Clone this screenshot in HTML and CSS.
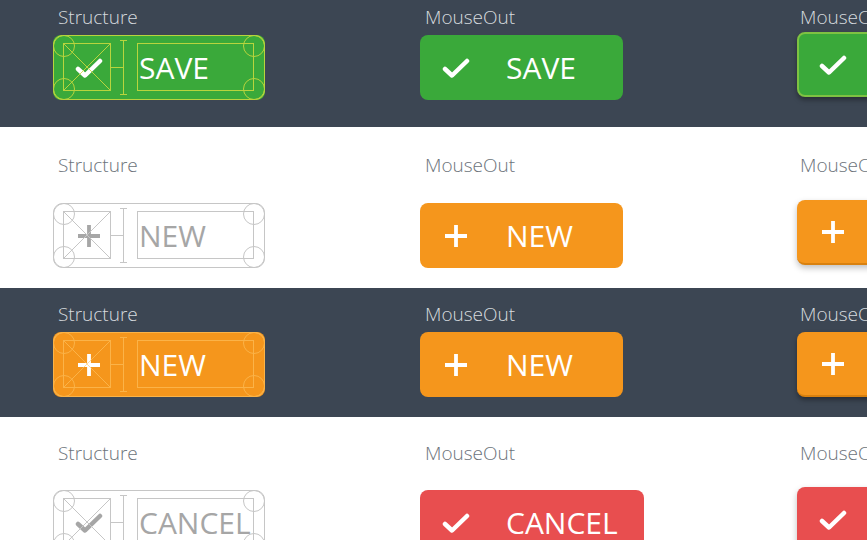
FILE: index.html
```html
<!DOCTYPE html>
<html lang="en">
<head>
    <meta charset="UTF-8">
    <meta name="viewport" content="width=device-width, initial-scale=1.0">
    <title>Button States</title>
    <link rel="stylesheet" href="styles.css">
</head>
<body>

    <!-- Save -->
    <section class="row dark row-save">
        <div class="cell">
            <p class="label">Structure</p>
            <div class="btn green structure">
                <svg class="guides" viewBox="0 0 212 65"><rect x="0.5" y="0.5" width="211" height="64" rx="9"/><circle cx="11" cy="11" r="10.5"/><circle cx="11" cy="54" r="10.5"/><circle cx="201" cy="11" r="10.5"/><circle cx="201" cy="54" r="10.5"/><rect x="10.5" y="8.5" width="47" height="47"/><rect x="84.5" y="8.5" width="116" height="47"/><path d="M10.5 8.5L57.5 55.5M57.5 8.5L10.5 55.5M57.5 32.5H70.5M70.5 5V60M67 5.5H74M67 59.5H74"/></svg>
                <svg class="ico" viewBox="0 0 28 28"><path d="M3 15l7 6.5L25 7"/></svg>
                <span class="txt">SAVE</span>
            </div>
        </div>
        <div class="cell">
            <p class="label">MouseOut</p>
            <div class="btn green">
                <svg class="ico" viewBox="0 0 28 28"><path d="M3 15l7 6.5L25 7"/></svg>
                <span class="txt">SAVE</span>
            </div>
        </div>
        <div class="cell over">
            <p class="label">MouseOver</p>
            <div class="btn green hover">
                <svg class="ico" viewBox="0 0 28 28"><path d="M3 15l7 6.5L25 7"/></svg>
                <span class="txt">SAVE</span>
            </div>
        </div>
    </section>

    <!-- New, light -->
    <section class="row light row-new">
        <div class="cell">
            <p class="label">Structure</p>
            <div class="btn outline structure">
                <svg class="guides" viewBox="0 0 212 65"><rect x="0.5" y="0.5" width="211" height="64" rx="9"/><circle cx="11" cy="11" r="10.5"/><circle cx="11" cy="54" r="10.5"/><circle cx="201" cy="11" r="10.5"/><circle cx="201" cy="54" r="10.5"/><rect x="10.5" y="8.5" width="47" height="47"/><rect x="84.5" y="8.5" width="116" height="47"/><path d="M10.5 8.5L57.5 55.5M57.5 8.5L10.5 55.5M57.5 32.5H70.5M70.5 5V60M67 5.5H74M67 59.5H74"/></svg>
                <svg class="ico plus" viewBox="0 0 28 28"><path d="M14 3V25M3 14H25"/></svg>
                <span class="txt">NEW</span>
            </div>
        </div>
        <div class="cell">
            <p class="label">MouseOut</p>
            <div class="btn orange">
                <svg class="ico plus" viewBox="0 0 28 28"><path d="M14 3V25M3 14H25"/></svg>
                <span class="txt">NEW</span>
            </div>
        </div>
        <div class="cell over">
            <p class="label">MouseOver</p>
            <div class="btn orange hover">
                <svg class="ico plus" viewBox="0 0 28 28"><path d="M14 3V25M3 14H25"/></svg>
                <span class="txt">NEW</span>
            </div>
        </div>
    </section>

    <!-- New, dark -->
    <section class="row dark row-new-dark">
        <div class="cell">
            <p class="label">Structure</p>
            <div class="btn orange structure">
                <svg class="guides" viewBox="0 0 212 65"><rect x="0.5" y="0.5" width="211" height="64" rx="9"/><circle cx="11" cy="11" r="10.5"/><circle cx="11" cy="54" r="10.5"/><circle cx="201" cy="11" r="10.5"/><circle cx="201" cy="54" r="10.5"/><rect x="10.5" y="8.5" width="47" height="47"/><rect x="84.5" y="8.5" width="116" height="47"/><path d="M10.5 8.5L57.5 55.5M57.5 8.5L10.5 55.5M57.5 32.5H70.5M70.5 5V60M67 5.5H74M67 59.5H74"/></svg>
                <svg class="ico plus" viewBox="0 0 28 28"><path d="M14 3V25M3 14H25"/></svg>
                <span class="txt">NEW</span>
            </div>
        </div>
        <div class="cell">
            <p class="label">MouseOut</p>
            <div class="btn orange">
                <svg class="ico plus" viewBox="0 0 28 28"><path d="M14 3V25M3 14H25"/></svg>
                <span class="txt">NEW</span>
            </div>
        </div>
        <div class="cell over">
            <p class="label">MouseOver</p>
            <div class="btn orange hover flat">
                <svg class="ico plus" viewBox="0 0 28 28"><path d="M14 3V25M3 14H25"/></svg>
                <span class="txt">NEW</span>
            </div>
        </div>
    </section>

    <!-- Cancel -->
    <section class="row light row-cancel">
        <div class="cell">
            <p class="label">Structure</p>
            <div class="btn outline structure">
                <svg class="guides" viewBox="0 0 212 65"><rect x="0.5" y="0.5" width="211" height="64" rx="9"/><circle cx="11" cy="11" r="10.5"/><circle cx="11" cy="54" r="10.5"/><circle cx="201" cy="11" r="10.5"/><circle cx="201" cy="54" r="10.5"/><rect x="10.5" y="8.5" width="47" height="47"/><rect x="84.5" y="8.5" width="116" height="47"/><path d="M10.5 8.5L57.5 55.5M57.5 8.5L10.5 55.5M57.5 32.5H70.5M70.5 5V60M67 5.5H74M67 59.5H74"/></svg>
                <svg class="ico" viewBox="0 0 28 28"><path d="M3 15l7 6.5L25 7"/></svg>
                <span class="txt">CANCEL</span>
            </div>
        </div>
        <div class="cell">
            <p class="label">MouseOut</p>
            <div class="btn red wide">
                <svg class="ico" viewBox="0 0 28 28"><path d="M3 15l7 6.5L25 7"/></svg>
                <span class="txt">CANCEL</span>
            </div>
        </div>
        <div class="cell over">
            <p class="label">MouseOver</p>
            <div class="btn red wide hover">
                <svg class="ico" viewBox="0 0 28 28"><path d="M3 15l7 6.5L25 7"/></svg>
                <span class="txt">CANCEL</span>
            </div>
        </div>
    </section>

</body>
</html>
```

FILE: styles.css
```css
html, body {
    margin: 0;
    padding: 0;
}
body {
    width: 867px;
    height: 540px;
    overflow: hidden;
    font-family: 'Open Sans', 'DejaVu Sans', sans-serif;
    background: #fff;
}
.row {
    display: grid;
    grid-template-columns: 367px 377px 1fr;
    padding-left: 53px;
}
.row.dark {
    background-color: #3c4653;
}
.row.light {
    background-color: #fff;
}
.row-save {
    padding-top: 5px;
    height: 122px;
}
.row-new {
    padding-top: 26px;
    height: 135px;
}
.row-new-dark {
    padding-top: 14px;
    height: 115px;
}
.row-cancel {
    padding-top: 24px;
    height: 200px;
}
.label {
    margin: 0 0 6px 5px;
    font-size: 19px;
    font-weight: 300;
    line-height: 24px;
    white-space: nowrap;
}
.over .label {
    margin-left: 3px;
}
.dark .label {
    color: #d6dade;
}
.light .label {
    color: #6c737b;
}
.row-new .label {
    margin-bottom: 26px;
}
.row-cancel .label {
    margin-bottom: 25px;
}

/* Buttons */
.btn {
    position: relative;
    display: flex;
    align-items: center;
    box-sizing: border-box;
    width: 203px;
    height: 65px;
    padding-left: 22px;
    border-radius: 8px;
    color: #fff;
}
.btn.wide {
    width: 224px;
}
.btn.structure {
    width: 212px;
}
.ico {
    width: 28px;
    height: 28px;
    flex: none;
    fill: none;
    stroke: #fff;
    stroke-width: 4.5;
    stroke-linecap: round;
    stroke-linejoin: round;
}
.ico.plus {
    stroke-width: 3.8;
    stroke-linecap: butt;
}
.txt {
    margin-left: 36px;
    font-size: 30px;
    font-weight: 500;
    line-height: 1;
    white-space: nowrap;
    position: relative;
}
.green {
    background-color: #3aa93a;
}
.orange {
    background-color: #f5961c;
}
.red {
    background-color: #e84e4f;
}
.outline {
    background: transparent;
    color: #a6a6a6;
}
.outline .ico {
    stroke: #a6a6a6;
}

/* structure guide lines */
.guides {
    position: absolute;
    left: 0;
    top: 0;
    width: 212px;
    height: 65px;
    fill: none;
    stroke-width: 1;
}
.green .guides {
    stroke: #cfdc3e;
    opacity: 0.85;
}
.orange .guides {
    stroke: #ffc766;
    opacity: 0.6;
}
.outline .guides {
    stroke: #c6c6c6;
}

/* hover state */
.hover {
    transform: translateY(-3px);
    box-shadow: 0 3px 5px rgba(0, 0, 0, 0.35);
}
.hover.flat {
    transform: none;
}
.green.hover {
    border: 2px solid #7ec242;
    padding-left: 20px;
}
.orange.hover {
    border-bottom: 2px solid #d9810f;
}
.light .hover {
    box-shadow: 0 3px 6px rgba(0, 0, 0, 0.25);
}
```
